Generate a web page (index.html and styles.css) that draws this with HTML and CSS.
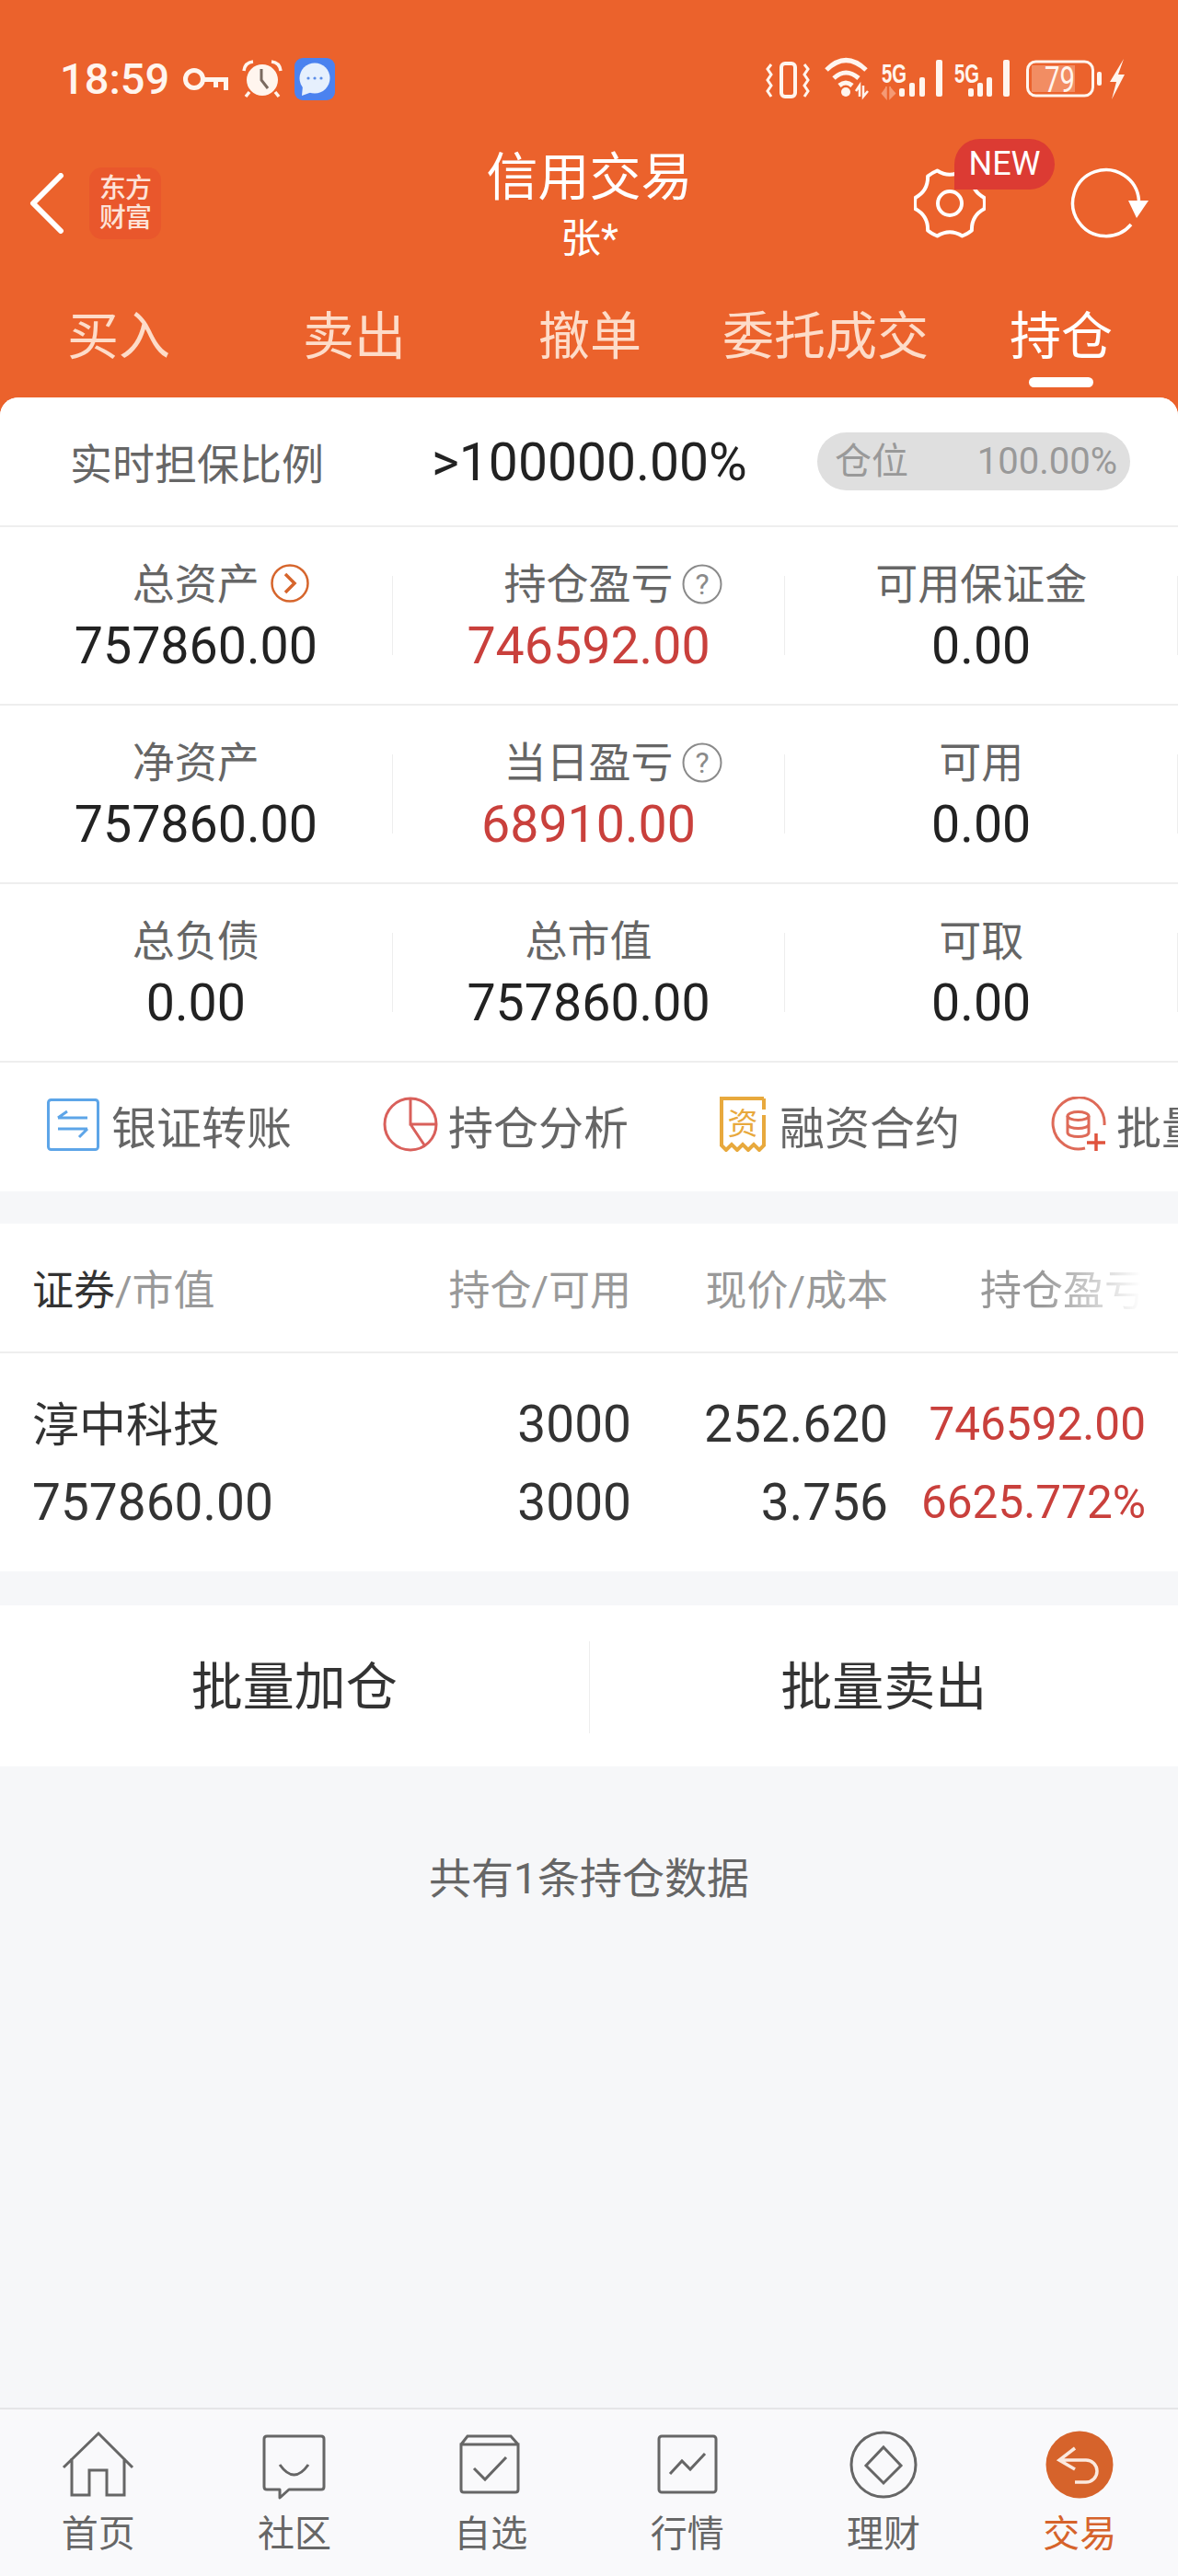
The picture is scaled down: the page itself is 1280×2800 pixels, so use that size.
FILE: index.html
```html
<!DOCTYPE html>
<html lang="en">
<head>
<meta charset="UTF-8" />
<title>信用交易</title>
<link rel="stylesheet" href="styles.css">
</head>
<body>
<div class="page">
  <div class="status">
    <div class="status-left">
      <span class="clock">18:59</span>
      <svg class="ic-key" width="50" height="28" viewBox="0 0 50 28"><circle cx="13" cy="14" r="9.5" fill="none" stroke="#fff5ee" stroke-width="5"/><path d="M22 12 H50 V26 H45 V17 H39 V23 H34 V17 H22 Z" fill="#fff5ee"/></svg>
      <svg class="ic-alarm" width="44" height="42" viewBox="0 0 44 42"><circle cx="22" cy="22" r="17" fill="#fff5ee"/><path d="M2 12 Q3 3 12 2 M42 12 Q41 3 32 2 M8 35 L4 40 M36 35 L40 40" fill="none" stroke="#fff5ee" stroke-width="3.5"/><path d="M21 10 V22 L28 31" fill="none" stroke="#7a6a60" stroke-width="3"/></svg>
      <svg class="ic-msg" width="44" height="46" viewBox="0 0 44 46"><rect width="44" height="46" rx="9" fill="#4b82ef"/><circle cx="22" cy="22" r="16.5" fill="#e6f0fd"/><path d="M9 30 L8 41 L19 37 Z" fill="#e6f0fd"/><circle cx="15" cy="22" r="1.6" fill="#5b8ee8"/><circle cx="22" cy="22" r="1.6" fill="#5b8ee8"/><circle cx="29" cy="22" r="1.6" fill="#5b8ee8"/></svg>
    </div>
    <div class="status-right">
      <svg width="48" height="48" viewBox="0 0 48 48"><rect x="17" y="7" width="15" height="36" rx="4" fill="none" stroke="#fff5ee" stroke-width="4"/><path d="M6 8 L2 13 L6 19 L2 25 L6 31 L2 37 L6 43 M42 8 L46 13 L42 19 L46 25 L42 31 L46 37 L42 43" fill="none" stroke="#fff5ee" stroke-width="3"/></svg>
      <svg class="ic-wifi" width="52" height="48" viewBox="0 0 52 48"><path d="M3 14 Q24 -7 46 14 M11 23 Q24 11 38 23 M17 31 Q24 25 31 31" fill="none" stroke="#fff5ee" stroke-width="5"/><circle cx="24" cy="38" r="5" fill="#fff5ee"/><path d="M39 43 V31 L35 37 M43 31 V43 L48 37" fill="none" stroke="#fff5ee" stroke-width="2.5"/></svg>
      <svg class="ic-sig" width="68" height="48" viewBox="0 0 68 48"><text class="sig-text" x="1" y="28" textLength="27" lengthAdjust="spacingAndGlyphs">5G</text><path d="M6 32 V45 L1 39 M10 32 V45 L16 39" fill="#f59a75" stroke="#f59a75" stroke-width="1.5"/><rect x="20" y="34" width="6" height="9" rx="2" fill="#fff5ee"/><rect x="31" y="28" width="6" height="15" rx="2" fill="#fff5ee"/><rect x="42" y="22" width="6" height="21" rx="2" fill="#fff5ee"/><rect x="60" y="3" width="7" height="40" rx="2" fill="#fff5ee"/></svg>
      <svg class="ic-sig2" width="62" height="48" viewBox="0 0 62 48"><text class="sig-text" x="1" y="28" textLength="27" lengthAdjust="spacingAndGlyphs">5G</text><rect x="16" y="34" width="6" height="9" rx="2" fill="#fff5ee"/><rect x="26" y="28" width="6" height="15" rx="2" fill="#fff5ee"/><rect x="36" y="22" width="6" height="21" rx="2" fill="#fff5ee"/><rect x="54" y="3" width="7" height="40" rx="2" fill="#fff5ee"/></svg>
      <svg class="ic-batt" width="84" height="48" viewBox="0 0 84 48"><rect x="2.500" y="5" width="71" height="37" rx="9" fill="none" stroke="#fff5ee" stroke-width="3"/><path d="M7 9 H54 V38 H7 Z" fill="#f28d63"/><text class="batt-text" x="21" y="38" textLength="33" lengthAdjust="spacingAndGlyphs">79</text><rect x="78" y="16" width="5" height="15" rx="2" fill="#fff5ee"/></svg>
      <svg class="ic-bolt" width="18" height="48" viewBox="0 0 18 48"><path d="M16 2 L1 27 H8 L3 46 L17 19 H10 Z" fill="#fff5ee"/></svg>
    </div>
  </div>

  <div class="nav">
    <div class="nav-left">
      <svg width="38" height="66" viewBox="0 0 38 66"><path d="M34 3 L4 33 L34 63" fill="none" stroke="#fff" stroke-width="6" stroke-linecap="round" stroke-linejoin="round"/></svg>
      <div class="logo">东方<br>财富</div>
    </div>
    <div class="nav-title">
      <div class="title">信用交易</div>
      <div class="subtitle">张*</div>
    </div>
    <div class="nav-right">
      <div class="gear">
        <svg width="78" height="76" viewBox="0 0 78 76"><path d="M52.6 2.5 Q39 11 25.4 2.5 A38 38 0 0 0 15.1 8.5 Q15.6 24.5 1.5 32 A38 38 0 0 0 1.5 44 Q15.6 51.5 15.1 67.5 A38 38 0 0 0 25.4 73.5 Q39 65 52.6 73.5 A38 38 0 0 0 62.9 67.5 Q62.4 51.5 76.5 44 A38 38 0 0 0 76.5 32 Q62.4 24.5 62.9 8.5 A38 38 0 0 0 52.6 2.5 Z" fill="none" stroke="#fff" stroke-width="4" stroke-linejoin="round"/><circle cx="39" cy="38" r="13" fill="none" stroke="#fff" stroke-width="4"/></svg>
        <span class="badge">NEW</span>
      </div>
      <svg class="refresh" width="86" height="80" viewBox="0 0 86 80"><path d="M66 63 A36 36 0 1 1 74.5 37" fill="none" stroke="#fff" stroke-width="3.5"/><path d="M63 37 H85 L72 56 Z" fill="#fff"/></svg>
    </div>
  </div>

  <div class="tabs">
    <div class="tab">买入</div>
    <div class="tab">卖出</div>
    <div class="tab">撤单</div>
    <div class="tab">委托成交</div>
    <div class="tab active">持仓</div>
  </div>

  <div class="content">
    <div class="ratio">
      <span class="ratio-label">实时担保比例</span>
      <span class="ratio-value">&gt;100000.00%</span>
      <div class="pill"><span>仓位</span><span class="pill-num">100.00%</span></div>
    </div>

    <div class="stat-row">
      <div class="stat">
        <div class="stat-label"><span class="has-icon">总资产<svg class="stat-icon go" width="42" height="42" viewBox="0 0 42 42"><circle cx="21" cy="21" r="19.5" fill="none" stroke="#d6652c" stroke-width="2.5"/><path d="M16 11 L26 21 L16 31" fill="none" stroke="#d6652c" stroke-width="3.5"/></svg></span></div>
        <div class="stat-value">757860.00</div>
      </div>
      <i class="vline"></i>
      <div class="stat">
        <div class="stat-label"><span class="has-icon">持仓盈亏<svg class="stat-icon" width="44" height="44" viewBox="0 0 44 44"><circle cx="22" cy="22" r="20.5" fill="none" stroke="#8a8a8a" stroke-width="2"/><text class="help-mark" x="22" y="33" text-anchor="middle">?</text></svg></span></div>
        <div class="stat-value red">746592.00</div>
      </div>
      <i class="vline"></i>
      <div class="stat">
        <div class="stat-label">可用保证金</div>
        <div class="stat-value">0.00</div>
      </div>
      <i class="vline"></i>
    </div>

    <div class="stat-row">
      <div class="stat">
        <div class="stat-label">净资产</div>
        <div class="stat-value">757860.00</div>
      </div>
      <i class="vline"></i>
      <div class="stat">
        <div class="stat-label"><span class="has-icon">当日盈亏<svg class="stat-icon" width="44" height="44" viewBox="0 0 44 44"><circle cx="22" cy="22" r="20.5" fill="none" stroke="#8a8a8a" stroke-width="2"/><text class="help-mark" x="22" y="33" text-anchor="middle">?</text></svg></span></div>
        <div class="stat-value red">68910.00</div>
      </div>
      <i class="vline"></i>
      <div class="stat">
        <div class="stat-label">可用</div>
        <div class="stat-value">0.00</div>
      </div>
      <i class="vline"></i>
    </div>

    <div class="stat-row">
      <div class="stat">
        <div class="stat-label">总负债</div>
        <div class="stat-value">0.00</div>
      </div>
      <i class="vline"></i>
      <div class="stat">
        <div class="stat-label">总市值</div>
        <div class="stat-value">757860.00</div>
      </div>
      <i class="vline"></i>
      <div class="stat">
        <div class="stat-label">可取</div>
        <div class="stat-value">0.00</div>
      </div>
      <i class="vline"></i>
    </div>

    <div class="tools">
      <div class="tool">
        <svg width="60" height="60" viewBox="0 0 60 60"><rect x="2.5" y="3.5" width="54" height="54" rx="3" fill="none" stroke="#5da5e8" stroke-width="3"/><path d="M13 23 H45 M13 23 L23 16 M13 35 H45 M45 35 L36 44" fill="none" stroke="#5da5e8" stroke-width="3"/></svg>
        <span>银证转账</span>
      </div>
      <div class="tool">
        <svg width="60" height="60" viewBox="0 0 60 60"><circle cx="30" cy="30" r="28" fill="none" stroke="#d9605b" stroke-width="3"/><path d="M30 2 V30 H58 M30 30 L46 54" fill="none" stroke="#d9605b" stroke-width="3"/></svg>
        <span>持仓分析</span>
      </div>
      <div class="tool">
        <svg width="54" height="60" viewBox="0 0 54 60"><path d="M48 2 H2 V53 L7 58 L13 52 L19 58 L25 52 L31 58 L37 52 L43 58 L48 53 V20 M48 2 V14" fill="none" stroke="#e8a93d" stroke-width="4"/><text class="zi" x="25" y="41" text-anchor="middle">资</text></svg>
        <span>融资合约</span>
      </div>
      <div class="tool">
        <svg width="60" height="60" viewBox="0 0 60 60"><path d="M37 56 A28 28 0 1 1 58 31" fill="none" stroke="#de6a58" stroke-width="3"/><path d="M18 21 V39 C18 45 41 45 41 39 V21 M18 30 C18 36 41 36 41 30" fill="none" stroke="#de6a58" stroke-width="3"/><ellipse cx="29.500" cy="21" rx="11.500" ry="4.500" fill="none" stroke="#de6a58" stroke-width="3"/><path d="M39 50 H59 M49 40 V59" fill="none" stroke="#e0533d" stroke-width="3.500"/></svg>
        <span>批量加仓</span>
      </div>
    </div>

    <div class="band"></div>

    <div class="table-head">
      <span class="head-first"><b>证券</b>/市值</span>
      <span class="num">持仓/可用</span>
      <span class="num">现价/成本</span>
      <span class="num fade">持仓盈亏</span>
    </div>
    <div class="table-row">
      <span class="stock-name">淳中科技</span>
      <span class="num">3000</span>
      <span class="num">252.620</span>
      <span class="num red small">746592.00</span>
      <span>757860.00</span>
      <span class="num">3000</span>
      <span class="num">3.756</span>
      <span class="num red small">6625.772%</span>
    </div>

    <div class="band band-2"></div>

    <div class="batch">
      <div class="batch-btn">批量加仓</div>
      <div class="batch-btn">批量卖出</div>
    </div>

    <div class="summary">共有1条持仓数据</div>
  </div>

  <div class="tabbar">
    <div class="bar-item">
      <svg width="80" height="76" viewBox="0 0 80 76"><path d="M2 40 L40 3 L77 40 M11 30 V70 H30 V43 H49 V70 H68 V30" fill="none" stroke="#666" stroke-width="3"/></svg>
      <span>首页</span>
    </div>
    <div class="bar-item">
      <svg width="80" height="76" viewBox="0 0 80 76"><path d="M10 6 H69 Q72 6 72 9 V61 Q72 64 69 64 H34 L24 73 V64 H10 Q7 64 7 61 V9 Q7 6 10 6 Z M24 37 Q39.500 59 55 37" fill="none" stroke="#666" stroke-width="3" stroke-linejoin="round"/></svg>
      <span>社区</span>
    </div>
    <div class="bar-item">
      <svg width="80" height="76" viewBox="0 0 80 76"><path d="M8 15 L15 6 H62 L70 15 M8 15 H70 V64 Q70 67 67 67 H11 Q8 67 8 64 Z M22 41 L34 53 L57 29" fill="none" stroke="#666" stroke-width="3"/></svg>
      <span>自选</span>
    </div>
    <div class="bar-item">
      <svg width="80" height="76" viewBox="0 0 80 76"><rect x="9" y="6" width="62" height="61" rx="3" fill="none" stroke="#666" stroke-width="3"/><path d="M21 47 L34 33 L43 42 L59 25" fill="none" stroke="#666" stroke-width="3"/></svg>
      <span>行情</span>
    </div>
    <div class="bar-item">
      <svg width="80" height="76" viewBox="0 0 80 76"><circle cx="40" cy="37" r="35" fill="none" stroke="#666" stroke-width="3"/><path d="M40 18 L59 38 L40 57 L21 38 Z" fill="none" stroke="#666" stroke-width="3"/></svg>
      <span>理财</span>
    </div>
    <div class="bar-item current">
      <svg width="80" height="76" viewBox="0 0 80 76"><circle cx="40" cy="37" r="36.500" fill="#d6632b"/><path d="M35 19 L18 32 L35 42 M18 32 H47 A12 12 0 0 1 47 56 H35" fill="none" stroke="#fbe9df" stroke-width="3.500"/></svg>
      <span>交易</span>
    </div>
  </div>
</div>
</body>
</html>
```

FILE: styles.css
```css
* {
  box-sizing: border-box;
}
body {
  margin: 0;
  font-family: Roboto, "Noto Sans CJK SC", sans-serif;
  color: #222;
}
.page {
  width: 1280px;
  height: 2800px;
  overflow: hidden;
  background: #eb622c;
  display: flex;
  flex-direction: column;
}

/* status bar */
.status {
  height: 150px;
  padding: 62px 57px 0 65px;
  display: flex;
  justify-content: space-between;
  align-items: flex-start;
}
.status-left,
.status-right {
  height: 48px;
  display: flex;
  align-items: center;
}
.clock {
  font-size: 47px;
  line-height: 48px;
  font-weight: 500;
  color: #fff5ee;
  width: 133px;
}
.ic-alarm {
  margin-left: 15px;
}
.ic-msg {
  margin-left: 13px;
}
.ic-wifi {
  margin-left: 15px;
}
.ic-sig {
  margin-left: 10px;
}
.ic-sig2 {
  margin-left: 11px;
}
.ic-batt {
  margin-left: 16px;
}
.ic-bolt {
  margin-left: 7px;
}
.sig-text {
  font-family: "Liberation Sans", sans-serif;
  font-size: 29px;
  font-weight: 700;
  fill: #fff5ee;
}
.batt-text {
  font-family: Roboto, sans-serif;
  font-size: 38px;
  fill: #fff5ee;
}

/* title row */
.nav {
  height: 140px;
  padding: 0 31px 0 32px;
  display: grid;
  grid-template-columns: 1fr auto 1fr;
  align-items: center;
  color: #fff;
}
.nav-left {
  display: flex;
  align-items: center;
  gap: 27px;
}
.logo {
  width: 78px;
  height: 78px;
  border-radius: 14px;
  background: #e9572c;
  color: #fde3d8;
  font-size: 29px;
  line-height: 32px;
  font-weight: 500;
  letter-spacing: -1px;
  text-align: center;
  padding-top: 7px;
}
.nav-title {
  padding-top: 8px;
  text-align: center;
}
.title {
  font-size: 56px;
  line-height: 70px;
}
.subtitle {
  font-size: 44px;
  line-height: 64px;
}
.nav-right {
  display: flex;
  justify-content: flex-end;
  align-items: center;
  gap: 92px;
}
.gear {
  position: relative;
  width: 78px;
  height: 76px;
}
.gear svg {
  display: block;
}
.badge {
  position: absolute;
  left: 44px;
  top: -32px;
  width: 109px;
  height: 55px;
  border-radius: 28px 28px 28px 0;
  background: #dc3b33;
  color: #fff;
  font-size: 36px;
  line-height: 55px;
  text-align: center;
}

/* trade tabs */
.tabs {
  height: 142px;
  padding: 48px 0 0 1px;
  display: grid;
  grid-template-columns: repeat(5, 256px);
}
.tab {
  position: relative;
  font-size: 56px;
  line-height: 56px;
  text-align: center;
  color: #fddcc9;
}
.tab.active {
  color: #fff;
}
.tab.active::after {
  content: "";
  position: absolute;
  left: 93px;
  top: 72px;
  width: 70px;
  height: 11px;
  border-radius: 6px;
  background: #fff;
}

/* white card */
.content {
  flex: 1;
  background: #f6f7f9;
  border-radius: 20px 20px 0 0;
  overflow: hidden;
  display: flex;
  flex-direction: column;
}
.ratio {
  height: 141px;
  flex: none;
  background: #fff;
  border-bottom: 2px solid #eee;
  padding: 0 52px 0 76px;
  display: flex;
  align-items: center;
}
.ratio-label {
  width: 393px;
  font-size: 46px;
  margin-bottom: 2px;
  color: #666;
}
.ratio-value {
  width: 419px;
  font-size: 57px;
  padding-top: 2px;
  color: #222;
}
.pill {
  width: 340px;
  height: 63px;
  border-radius: 32px;
  background: #dfdfdf;
  color: #999;
  font-size: 40px;
  line-height: 63px;
  padding: 0 14px 0 19px;
  display: flex;
  justify-content: space-between;
}
.stat-row {
  height: 194px;
  flex: none;
  background: #fff;
  border-bottom: 2px solid #eee;
  display: flex;
  align-items: center;
}
.stat {
  flex: 1;
  padding-top: 6px;
  text-align: center;
}
.vline {
  width: 1px;
  height: 86px;
  background: #eee;
}
.stat-label {
  font-size: 46px;
  line-height: 62px;
  color: #666;
}
.stat-value {
  font-size: 55.5px;
  line-height: 74px;
  color: #222;
}
.has-icon {
  position: relative;
  display: inline-block;
}
.stat-icon {
  position: absolute;
  left: calc(100% + 9px);
  top: 9px;
}
.stat-icon.go {
  left: calc(100% + 12px);
}
.help-mark {
  font-family: Roboto, sans-serif;
  font-size: 32px;
  fill: #8a8a8a;
}
.red {
  color: #c9403c;
}

/* shortcuts */
.tools {
  height: 140px;
  flex: none;
  background: #fff;
  padding: 0 0 6px 50px;
  display: flex;
  align-items: center;
  gap: 99px;
  overflow: hidden;
}
.tool {
  flex: none;
  display: flex;
  align-items: center;
  gap: 11px;
  font-size: 49px;
  color: #666;
}
.zi {
  font-size: 33px;
  fill: #e8a93d;
}
.band {
  height: 35px;
  flex: none;
}
.band-2 {
  height: 37px;
}

/* holdings table */
.table-head,
.table-row {
  flex: none;
  background: #fff;
  padding: 0 35px;
  display: grid;
  grid-template-columns: 451px 200px 279px 280px;
}
.table-head {
  height: 141px;
  border-bottom: 2px solid #eee;
  align-items: center;
  font-size: 45px;
  color: #999;
}
.head-first b {
  font-weight: 400;
  color: #333;
}
.num {
  text-align: right;
}
.fade {
  -webkit-mask-image: linear-gradient(to right, #000 60%, transparent 98%);
  mask-image: linear-gradient(to right, #000 60%, transparent 98%);
}
.table-row {
  height: 237px;
  padding-top: 34px;
  grid-auto-rows: 85px;
  align-items: center;
  font-size: 55px;
  color: #333;
}
.stock-name {
  font-size: 51px;
  margin-bottom: 6px;
}
.small {
  font-size: 49.5px;
  color: #c9403c;
}

/* batch buttons */
.batch {
  height: 175px;
  flex: none;
  background: #fff;
  padding-top: 2px;
  display: flex;
  align-items: center;
}
.batch-btn {
  flex: 1;
  font-size: 56px;
  line-height: 100px;
  text-align: center;
  color: #333;
}
.batch-btn + .batch-btn {
  border-left: 1px solid #eee;
}
.summary {
  padding-top: 92px;
  font-size: 46px;
  line-height: 60px;
  text-align: center;
  color: #666;
}

/* bottom navigation */
.tabbar {
  height: 183px;
  flex: none;
  background: #f9f9fb;
  border-top: 2px solid #e5e5e7;
  padding-top: 23px;
  display: grid;
  grid-template-columns: repeat(6, 1fr);
}
.bar-item {
  display: flex;
  flex-direction: column;
  align-items: center;
  font-size: 40px;
  line-height: 52px;
  color: #666;
}
.bar-item span {
  margin-top: 11px;
}
.bar-item.current {
  color: #d6632b;
}
```
